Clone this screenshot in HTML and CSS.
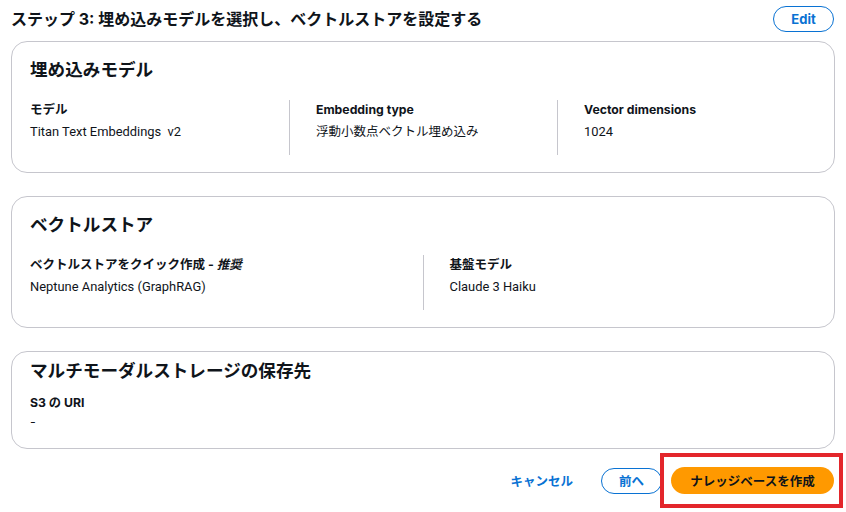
FILE: index.html
```html
<!DOCTYPE html>
<html lang="ja">
<head>
<meta charset="utf-8">
<link rel="stylesheet" href="styles.css">
</head>
<body>
<div class="page">
  <div class="header">
    <h2 class="title">ステップ 3: 埋め込みモデルを選択し、ベクトルストアを設定する</h2>
    <button class="btn btn-normal btn-edit">Edit</button>
  </div>

  <section class="card">
    <h3 class="card-title">埋め込みモデル</h3>
    <div class="cols cols-3">
      <div class="col">
        <div class="label">モデル</div>
        <div class="value lat">Titan Text Embeddings&nbsp; v2</div>
      </div>
      <div class="col col-div">
        <div class="label lat">Embedding type</div>
        <div class="value">浮動小数点ベクトル埋め込み</div>
      </div>
      <div class="col col-div">
        <div class="label lat">Vector dimensions</div>
        <div class="value lat">1024</div>
      </div>
    </div>
  </section>

  <section class="card">
    <h3 class="card-title">ベクトルストア</h3>
    <div class="cols cols-2">
      <div class="col">
        <div class="label">ベクトルストアをクイック作成 - <i>推奨</i></div>
        <div class="value lat">Neptune Analytics (GraphRAG)</div>
      </div>
      <div class="col col-div">
        <div class="label">基盤モデル</div>
        <div class="value lat">Claude 3 Haiku</div>
      </div>
    </div>
  </section>

  <section class="card card-compact">
    <h3 class="card-title">マルチモーダルストレージの保存先</h3>
    <div class="label lat">S3 の URI</div>
    <div class="value value-tight">-</div>
  </section>

  <div class="actions">
    <a class="link-btn">キャンセル</a>
    <button class="btn btn-normal btn-prev">前へ</button>
    <button class="btn btn-primary">ナレッジベースを作成</button>
  </div>

  <div class="highlight"></div>
</div>
</body>
</html>
```

FILE: styles.css
```css
* { box-sizing: border-box; }
html, body {
  margin: 0;
  padding: 0;
  background: #ffffff;
}
body {
  font-family: Inter, "Noto Sans CJK JP", sans-serif;
  color: #0f141a;
  font-size: 12.5px;
  width: 846px;
  height: 512px;
  overflow: hidden;
}
.page {
  position: relative;
  padding: 0 11px;
}
.header {
  display: flex;
  justify-content: space-between;
  align-items: center;
  padding-top: 6px;
  height: 32px;
}
.title {
  margin: 0;
  font-size: 16px;
  line-height: 20px;
  font-weight: 700;
}
.btn {
  font-family: Inter, "Noto Sans CJK JP", sans-serif;
  font-weight: 700;
  font-size: 12.5px;
  border-radius: 20px;
  cursor: pointer;
  display: inline-flex;
  align-items: center;
  justify-content: center;
  padding: 0;
}
.btn-normal {
  background: #ffffff;
  border: 1.5px solid #0972d3;
  color: #0972d3;
  width: 61px;
  height: 26px;
}
.btn-edit { margin-right: 1px; font-size: 13px; }
.card {
  margin-top: 9px;
  border: 1px solid #c6c6cd;
  border-radius: 16px;
  padding: 16px 19px 17px 18px;
  height: 132px;
}
.card + .card { margin-top: 23px; }
.card-title {
  margin: 0 0 18px;
  font-size: 17.6px;
  line-height: 24px;
  font-weight: 700;
}
.cols {
  display: grid;
  height: 55px;
}
.cols-3 { grid-template-columns: 259px 268px 1fr; }
.cols-2 { grid-template-columns: 1fr 1fr; }
.col-div {
  border-left: 1px solid #c6c6cd;
  padding-left: 26px;
}
.col .label { margin-top: 1px; }
.label {
  font-weight: 700;
  line-height: 18px;
}
.label.lat { font-size: 12.25px; }
.label i { font-style: italic; }
.value {
  margin-top: 3px;
  line-height: 20px;
}
.value.lat {
  font-family: Roboto, "Noto Sans CJK JP", sans-serif;
  font-size: 12.9px;
}
.card-compact {
  padding-top: 7px;
  padding-bottom: 16px;
  height: 98px;
}
.card-compact .card-title { margin-bottom: 11px; }
.value-tight { margin-top: 0; }
.actions {
  display: flex;
  justify-content: flex-end;
  align-items: center;
  margin-top: 18px;
  padding-right: 1px;
}
.link-btn {
  color: #0972d3;
  font-weight: 700;
  margin-right: 28px;
  cursor: pointer;
}
.btn-prev { margin-right: 9px; }
.btn-primary {
  background: #ff9900;
  border: none;
  color: #0f141a;
  width: 163px;
  height: 27px;
}
.highlight {
  position: absolute;
  left: 660px;
  top: 453px;
  width: 183px;
  height: 55px;
  border: 4px solid #e3262b;
}
```
